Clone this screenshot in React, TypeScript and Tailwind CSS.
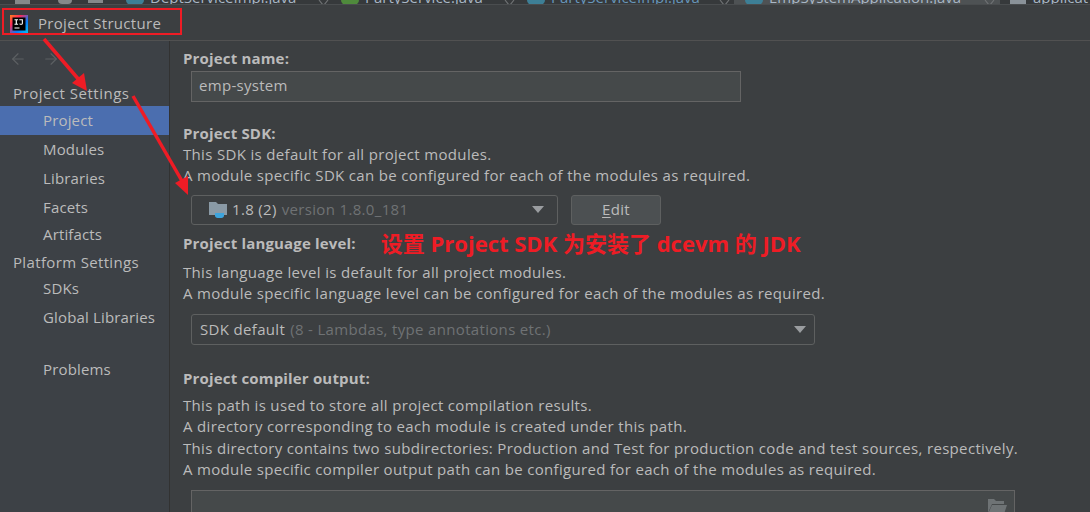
import { ArrowLeft, ArrowRight } from 'lucide-react'

const font = { fontFamily: '"Open Sans", "Noto Sans CJK SC", sans-serif' }

const projectSettings = ['Modules', 'Libraries', 'Facets']
const platformSettings = ['SDKs', 'Global Libraries']

const tabs = [
  { box: 'w-[215px] pl-[2px] pr-[9px]', icon: 'bg-[#3d7f96]', label: 'DeptServiceImpl.java', text: 'text-[#a9b7c6]' },
  { box: 'w-[186px] pl-[2px] pr-[9px]', icon: 'bg-[#4f8a3c]', label: 'PartyService.java', text: 'text-[#a9b7c6]' },
  { box: 'w-[209px] pl-[2px] pr-[3px]', icon: 'bg-[#3d7f96]', label: 'PartyServiceImpl.java', text: 'text-[#6897bb]' },
  { box: 'w-[266px] pl-[11px] pr-[4px] bg-[#4e5254]', icon: 'bg-[#3d7f96]', label: 'EmpSystemApplication.java', text: 'text-[#a9b7c6]' },
]

function TabClose() {
  return (
    <svg width="12" height="5" viewBox="0 0 12 5" className="shrink-0" fill="none">
      <path d="M1 0 5 5M10 0 6 5" stroke="#6e7173" strokeWidth="1.200" />
    </svg>
  )
}

function TopTabs() {
  return (
    <div className="flex h-[5px] overflow-hidden border-b border-[#4a4d4f] bg-[#36393b]">
      <div className="flex w-[124px] shrink-0 items-start pl-[15px]">
        <span className="h-[4px] w-[15px] bg-[#85888a]" />
        <span className="ml-[28px] h-[4px] w-[14px] rounded-b bg-[#85888a]" />
        <span className="ml-[16px] h-[3px] w-[15px] bg-[#85888a]" />
      </div>
      {tabs.map((t) => (
        <div key={t.label} className={`flex h-[5px] shrink-0 items-start justify-between overflow-hidden ${t.box}`}>
          <div className="flex items-start gap-[6px]">
            <span className={`h-[5px] w-[18px] shrink-0 rounded-b-full ${t.icon}`} />
            <span className={`-mt-[10px] whitespace-nowrap text-[15px] leading-[15px] ${t.text}`}>{t.label}</span>
          </div>
          <TabClose />
        </div>
      ))}
      <div className="flex shrink-0 items-start gap-[7px] pl-[10px]">
        <span className="h-[5px] w-[16px] shrink-0 bg-[#8a9299]" />
        <span className="-mt-[10px] whitespace-nowrap text-[15px] leading-[15px] text-[#a9b7c6]">applicat</span>
      </div>
    </div>
  )
}

function IdeaLogo() {
  return (
    <svg width="18" height="18" viewBox="0 0 18 18" className="shrink-0">
      <defs>
        <linearGradient id="logoEdge" x1="0" y1="0" x2="1" y2="1">
          <stop offset="0" stopColor="#fc801d" />
          <stop offset="0.3" stopColor="#fe2857" />
          <stop offset="0.65" stopColor="#087cfa" />
          <stop offset="1" stopColor="#07c3f2" />
        </linearGradient>
      </defs>
      <rect width="18" height="18" fill="url(#logoEdge)" />
      <rect x="2.500" y="2.500" width="13" height="13" fill="#000" />
      <path
        transform="translate(-1.500 -1.800) scale(1.200)"
        d="M5 5h3v.8H7v3h1v.8H5v-.8h1v-3H5zM9 5h3v3.400c0 .9-.6 1.300-1.500 1.300-.7 0-1.200-.3-1.500-.8l.6-.5c.2.300.5.500.8.500.4 0 .7-.2.700-.6V5.800H9z"
        fill="#fff"
      />
      <rect x="4.500" y="12.500" width="5" height="1" fill="#fff" />
    </svg>
  )
}

function SideItem({ label, active, short }: { label: string; active?: boolean; short?: boolean }) {
  return (
    <div
      className={`pl-[43px] text-[15px] tracking-[0.15px] text-[#bbbbbb] ${short ? 'h-[28px] leading-[25px]' : 'h-[29px] leading-[29px]'} ${active ? 'bg-[#4b6eaf]' : ''}`}
    >
      {label}
    </div>
  )
}

function Heading({ children, className }: { children: string; className?: string }) {
  return <div className={`text-[15px] font-bold leading-[21px] tracking-[0.17px] text-[#bbbbbb] ${className ?? ''}`}>{children}</div>
}

function Help({ children }: { children: string }) {
  return <div className="text-[15px] leading-[21.300px] tracking-[0.33px] text-[#bbbbbb]">{children}</div>
}

function Chevron() {
  return <span className="h-0 w-0 border-x-[6px] border-t-[7px] border-x-transparent border-t-[#9a9da0]" />
}

export default function App() {
  return (
    <div className="relative h-[512px] w-[1090px] overflow-hidden bg-[#3c3f41]" style={font}>
      <TopTabs />

      <div className="flex h-[36px] items-center gap-[10px] border-b border-[#515151] pt-[2px] pl-[10px]">
        <IdeaLogo />
        <span className="text-[15px] tracking-[0.3px] text-[#bbbbbb]">Project Structure</span>
      </div>

      <div className="flex h-[471px]">
        <aside className="w-[170px] shrink-0 border-r border-[#323232] bg-[#3d4146]">
          <div className="flex h-[40px] items-start gap-[15px] pl-[9px] pt-[9px] text-[#5d6063]">
            <ArrowLeft size={18} strokeWidth={1.5} />
            <ArrowRight size={18} strokeWidth={1.5} />
          </div>
          <div className="h-[25px] pl-[13px] text-[15px] leading-[25px] tracking-[0.5px] text-[#bbbbbb]">Project Settings</div>
          <SideItem label="Project" active />
          {projectSettings.map((s) => (
            <SideItem key={s} label={s} />
          ))}
          <SideItem label="Artifacts" short />
          <div className="h-[24px] pl-[13px] text-[15px] leading-[24px] tracking-[0.35px] text-[#bbbbbb]">Platform Settings</div>
          {platformSettings.map((s) => (
            <SideItem key={s} label={s} />
          ))}
          <div className="mt-[23px]">
            <SideItem label="Problems" />
          </div>
        </aside>

        <main className="flex-1 pl-[13px] pt-[7px]">
          <Heading>Project name:</Heading>
          <div className="ml-[8px] mt-[2px] flex h-[31px] w-[550px] items-center border border-[#646464] bg-[#45494a] pb-[2px] pl-[7px] text-[15px] tracking-[0.3px] text-[#bbbbbb]">
            emp-system
          </div>

          <Heading className="mt-[21px]">Project SDK:</Heading>
          <Help>This SDK is default for all project modules.</Help>
          <Help>A module specific SDK can be configured for each of the modules as required.</Help>
          <div className="ml-[8px] mt-[8px] flex gap-[13px]">
            <div className="flex h-[30px] w-[367px] items-center rounded-[3px] border border-[#5e6060] bg-[#3c3f41] pl-[17px] pr-[13px] text-[15px] tracking-[0.33px]">
              <svg width="20" height="18" viewBox="0 0 20 18" className="shrink-0">
                <path d="M0 1h7l2 2h9v11H0z" fill="#8a9aa6" />
                <path d="M6 12h9v2.500c0 1.400-1 2.500-2.500 2.500h-4C7 17 6 15.900 6 14.500z" fill="#3da4dd" />
              </svg>
              <span className="ml-[3px] text-[#bbbbbb]">1.8 (2)</span>
              <span className="ml-[5px] flex-1 text-[#6f7274]">version 1.8.0_181</span>
              <Chevron />
            </div>
            <div className="flex h-[30px] w-[90px] items-center justify-center rounded-[3px] border border-[#5e6060] bg-[#4c5052] text-[15px] tracking-[0.3px] text-[#bbbbbb]">
              <span className="underline underline-offset-2">E</span>dit
            </div>
          </div>

          <div className="mt-[8px] flex items-center">
            <Heading>Project language level:</Heading>
            <span className="ml-[25px] text-[22px] font-bold leading-[21px] text-[#ee1c25]">
              设置 Project SDK 为安装了 dcevm 的 JDK
            </span>
          </div>
          <div className="mt-[8px]">
            <Help>This language level is default for all project modules.</Help>
            <Help>A module specific language level can be configured for each of the modules as required.</Help>
          </div>
          <div className="ml-[8px] mt-[10px] flex h-[31px] w-[624px] items-center rounded-[3px] border border-[#5e6060] pl-[8px] pr-[8px] text-[15px] tracking-[0.33px]">
            <span className="text-[#bbbbbb]">SDK default</span>
            <span className="ml-[5px] flex-1 text-[#6f7274]">(8 - Lambdas, type annotations etc.)</span>
            <Chevron />
          </div>

          <Heading className="mt-[23px]">Project compiler output:</Heading>
          <div className="mt-[6px]">
            <Help>This path is used to store all project compilation results.</Help>
            <Help>A directory corresponding to each module is created under this path.</Help>
            <Help>This directory contains two subdirectories: Production and Test for production code and test sources, respectively.</Help>
            <Help>A module specific compiler output path can be configured for each of the modules as required.</Help>
          </div>
          <div className="ml-[8px] mt-[10px] flex h-[40px] w-[824px] justify-end border border-[#646464] bg-[#45494a] pr-[7px] pt-[8px]">
            <svg width="19" height="15" viewBox="0 0 19 15">
              <path d="M0 0h6l2 2h8v3H4L0 14z" fill="#6e7375" />
              <path d="M4 6h15l-3 9H0z" fill="#6e7375" />
            </svg>
          </div>
        </main>
      </div>

      {/* annotations drawn on top of the screenshot */}
      <div className="absolute left-[2px] top-[8px] h-[27px] w-[180px] border-[2px] border-[#ee1c25]" />
      <svg className="absolute inset-0" width="1090" height="512" viewBox="0 0 1090 512" fill="none">
        <path d="M44 39 80 81" stroke="#ee1c25" strokeWidth="3.500" />
        <path d="M87 91 72 83 84 73z" fill="#ee1c25" />
        <path d="M133 96 182 181" stroke="#ee1c25" strokeWidth="3.500" />
        <path d="M188 195 175 183 188 176z" fill="#ee1c25" />
      </svg>
    </div>
  )
}
